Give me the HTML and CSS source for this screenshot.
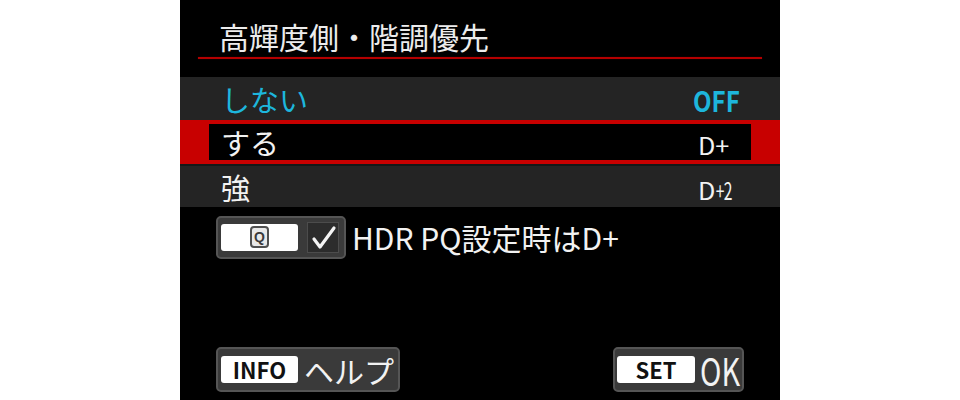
FILE: index.html
```html
<!DOCTYPE html>
<html lang="ja">
<head>
<meta charset="utf-8">
<title>高輝度側・階調優先</title>
<link rel="stylesheet" href="styles.css">
</head>
<body>
<div class="screen">
  <div class="title">高輝度側・階調優先</div>
  <div class="rule"></div>
  <div class="menu">
    <div class="row row-current">
      <span class="label">しない</span>
      <span class="value"><span class="value-off">OFF</span></span>
    </div>
    <div class="row row-selected">
      <div class="sel-inner">
        <span class="label">する</span>
        <span class="value"><span class="value-text">D+</span></span>
      </div>
    </div>
    <div class="row row-last">
      <span class="label">強</span>
      <span class="value"><span class="value-text">D<span class="sub">+2</span></span></span>
    </div>
  </div>
  <div class="option">
    <div class="qbox">
      <span class="key"><span class="qicon">Q</span></span>
      <span class="check">
        <svg width="30" height="29" viewBox="0 0 30 29"><path d="M6 16 L12 24 L26 5" fill="none" stroke="#f4f4f4" stroke-width="3.2" stroke-linecap="round" stroke-linejoin="round"/></svg>
      </span>
    </div>
    <span class="option-text">HDR PQ設定時はD+</span>
  </div>
  <div class="footer">
    <div class="btn btn-info">
      <span class="key key-text">INFO</span>
      <span class="btn-label">ヘルプ</span>
    </div>
    <div class="btn btn-set">
      <span class="key key-set key-text">SET</span>
      <span class="btn-ok"><span class="ok-text">OK</span></span>
    </div>
  </div>
</div>
</body>
</html>
```
FILE: styles.css
```css
html, body {
  margin: 0;
  padding: 0;
  background: #ffffff;
}
body {
  display: flex;
  justify-content: center;
}
.screen {
  width: 600px;
  height: 400px;
  background: #000000;
  display: flex;
  flex-direction: column;
  font-family: "Noto Sans CJK JP", "Noto Sans", sans-serif;
  color: #f0f0f0;
  overflow: hidden;
}
.title {
  font-size: 30px;
  line-height: 38px;
  height: 38px;
  padding: 17px 0 0 39px;
  color: #ececec;
  white-space: nowrap;
}
.rule {
  height: 2px;
  margin: 2px 18px 0 18px;
  background: #b40000;
  box-shadow: 0 0 1px #700000;
}
.menu {
  margin-top: 18px;
  display: flex;
  flex-direction: column;
}
.row {
  box-sizing: border-box;
  height: 43px;
  background: #242424;
  display: flex;
  align-items: center;
  padding: 0 40px 0 41px;
  font-size: 29px;
  color: #f2f2f2;
}
.row-current {
  color: #1db6dc;
}
.label {
  flex: 1;
  white-space: nowrap;
}
.value {
  width: 46px;
  white-space: nowrap;
}
.value-off {
  display: inline-block;
  font-weight: 700;
  font-size: 28px;
  color: #1db6dc;
  transform: scaleX(0.86);
  transform-origin: left center;
  margin-left: -1px;
}
.value-text {
  display: inline-block;
  font-size: 24px;
  color: #f2f2f2;
  margin-left: 4px;
  transform: scaleX(1.05);
  transform-origin: left center;
}
.sub {
  display: inline-block;
  transform: scaleX(0.62);
  transform-origin: left center;
  letter-spacing: -1px;
}
.row-selected {
  height: 44px;
  background: #c80000;
  padding: 4px 29px;
}
.sel-inner {
  flex: 1;
  height: 36px;
  background: #000000;
  display: flex;
  align-items: center;
  padding: 0 11px 0 12px;
}
.row-last {
  height: 43px;
  border-top: 2px solid #141818;
}
.option {
  margin-top: 8px;
  padding-left: 36px;
  display: flex;
  align-items: center;
}
.qbox {
  box-sizing: border-box;
  width: 130px;
  height: 43px;
  background: #3a3a3a;
  border: 2px solid #555555;
  border-radius: 5px;
  display: flex;
  align-items: center;
  padding-left: 3px;
}
.key {
  box-sizing: border-box;
  width: 77px;
  height: 27px;
  background: #ffffff;
  border-radius: 3px;
  display: flex;
  align-items: center;
  justify-content: center;
}
.qicon {
  box-sizing: border-box;
  width: 19px;
  height: 22px;
  border: 2px solid #505050;
  border-radius: 4px;
  background: #e8e8e8;
  color: #3a3a3a;
  font-family: "Liberation Sans", sans-serif;
  font-weight: 700;
  font-size: 14px;
  line-height: 18px;
  text-align: center;
}
.check {
  box-sizing: border-box;
  width: 32px;
  height: 31px;
  margin-left: 9px;
  background: #2c2c2c;
  border: 1px solid #4c4c4c;
  display: flex;
  align-items: center;
  justify-content: center;
}
.option-text {
  margin-left: 6px;
  font-size: 30px;
  color: #f2f2f2;
  white-space: nowrap;
}
.footer {
  margin-top: auto;
  padding: 0 36px 8px 36px;
  display: flex;
  justify-content: space-between;
  align-items: flex-end;
}
.btn {
  box-sizing: border-box;
  height: 45px;
  background: #3a3a3a;
  border: 2px solid #555555;
  border-radius: 5px;
  display: flex;
  align-items: center;
  padding-left: 3px;
}
.btn-info {
  width: 184px;
}
.btn-set {
  width: 131px;
  padding-left: 2px;
}
.key-text {
  color: #111111;
  font-weight: 700;
  font-size: 22px;
  line-height: 27px;
}
.key-set {
  width: 78px;
}
.btn-label {
  margin-left: 6px;
  font-size: 30px;
  line-height: 36px;
  color: #f2f2f2;
  white-space: nowrap;
}
.btn-ok {
  margin-left: 5px;
  width: 38px;
  height: 40px;
  display: flex;
  align-items: center;
}
.ok-text {
  display: inline-block;
  font-size: 38px;
  line-height: 40px;
  color: #f2f2f2;
  transform: scaleX(0.76);
  transform-origin: left center;
}
```
